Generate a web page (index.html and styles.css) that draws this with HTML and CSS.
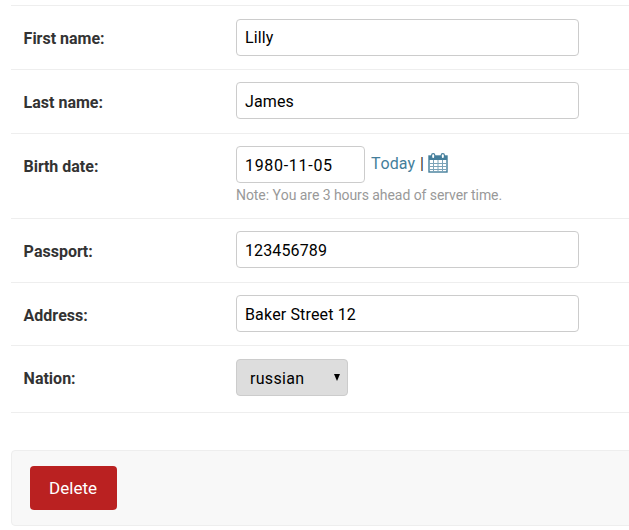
FILE: index.html
```html
<!DOCTYPE html>
<html lang="en">
<head>
  <meta charset="UTF-8" />
  <meta name="viewport" content="width=device-width, initial-scale=1.0"/>
  <title>Change person</title>
  <link rel="stylesheet" href="styles.css">
</head>
<body>
  <form class="change-form">
    <div class="form-row form-row-first">
      <label class="row-label" for="id_first_name">First name:</label>
      <input class="text-field field-first" id="id_first_name" type="text" value="Lilly">
    </div>
    <div class="form-row">
      <label class="row-label" for="id_last_name">Last name:</label>
      <input class="text-field" id="id_last_name" type="text" value="James">
    </div>
    <div class="form-row form-row-date">
      <label class="row-label" for="id_birth_date">Birth date:</label>
      <div class="date-field">
        <div class="date-line">
          <input class="text-field date-input" id="id_birth_date" type="text" value="1980-11-05">
          <a class="date-link" href="#">Today</a>
          <span class="date-sep">|</span>
          <a class="date-icon" href="#" aria-label="Choose a date">
            <svg width="20" height="20" viewBox="0 0 20 20">
              <rect x="1" y="3" width="18" height="16" fill="#fff" stroke="#447e9b" stroke-width="1.4"/>
              <rect x="1" y="3" width="18" height="4" fill="#447e9b"/>
              <path d="M1 10.5H19M1 13.5H19M1 16.5H19M5.5 7V19M10 7V19M14.5 7V19" fill="none" stroke="#7ba3b8" stroke-width="1"/>
              <rect x="3.6" y="0.6" width="3.2" height="5" rx="1.6" fill="#fff" stroke="#447e9b" stroke-width="1.2"/>
              <rect x="13.2" y="0.6" width="3.2" height="5" rx="1.6" fill="#fff" stroke="#447e9b" stroke-width="1.2"/>
            </svg>
          </a>
        </div>
        <p class="help-note">Note: You are 3 hours ahead of server time.</p>
      </div>
    </div>
    <div class="form-row">
      <label class="row-label" for="id_passport">Passport:</label>
      <input class="text-field" id="id_passport" type="text" value="123456789">
    </div>
    <div class="form-row">
      <label class="row-label" for="id_address">Address:</label>
      <input class="text-field field-address" id="id_address" type="text" value="Baker Street 12">
    </div>
    <div class="form-row form-row-last">
      <label class="row-label" for="id_nation">Nation:</label>
      <span class="select-wrap">
        <select class="select-field" id="id_nation">
          <option>russian</option>
        </select>
      </span>
    </div>
    <div class="submit-row">
      <a class="delete-link" href="#">Delete</a>
    </div>
  </form>
</body>
</html>
```

FILE: styles.css
```css
html, body {
  overflow: hidden;
}
body {
  font-family: Roboto, sans-serif;
  font-kerning: none;
  background: #fff;
  margin: 0;
  padding: 5.25px 0 0 11px;
  color: #333;
}
.form-row {
  display: flex;
  align-items: flex-start;
  box-sizing: border-box;
  height: 63.75px;
  border-top: 1px solid #eee;
  padding: 12.25px 0 0 12.6px;
}
.form-row-date {
  height: 85px;
}
.form-row-last {
  height: 68px;
  padding-top: 12.75px;
  border-bottom: 1px solid #eee;
}
.row-label {
  width: 212.4px;
  padding-top: 2px;
  font-size: 16px;
  font-weight: 700;
  line-height: 37px;
  color: #333;
}
.form-row-first .row-label,
.form-row-last .row-label {
  padding-top: 1px;
}
.text-field {
  box-sizing: border-box;
  width: 343px;
  height: 37px;
  padding: 1px 8px 0;
  border: 1px solid #ccc;
  border-radius: 4px;
  font-family: inherit;
  font-kerning: none;
  font-size: 16px;
  letter-spacing: 0.13px;
  color: #000;
  background: #fff;
}
.field-first {
  padding-top: 0;
}
.field-address {
  padding-top: 2px;
}
.date-line {
  display: flex;
  align-items: center;
  height: 37px;
}
.date-input {
  width: 129px;
  padding-top: 2px;
  letter-spacing: 0.7px;
}
.date-link {
  margin: 0 0 2px 6px;
  font-size: 16px;
  color: #447e9b;
  text-decoration: none;
}
.date-sep {
  margin: 0 0 2px 5px;
  font-size: 16px;
  color: #333;
}
.date-icon {
  display: flex;
  margin: 0 0 4px 4px;
}
.help-note {
  margin: 4px 0 0;
  font-size: 14px;
  letter-spacing: -0.07px;
  color: #999;
}
.select-wrap {
  position: relative;
  display: block;
  width: 112px;
  height: 37px;
}
.select-wrap::after {
  content: "";
  position: absolute;
  top: 15px;
  right: 8px;
  border-top: 7px solid #000;
  border-left: 3.5px solid transparent;
  border-right: 3.5px solid transparent;
}
.select-field {
  appearance: none;
  box-sizing: border-box;
  width: 112px;
  height: 37px;
  padding: 1px 13px 0;
  border: 1px solid #ccc;
  border-radius: 4px;
  font-family: inherit;
  font-kerning: none;
  font-size: 16px;
  letter-spacing: 0.3px;
  color: #000;
  background: #ddd;
}
.submit-row {
  display: flex;
  margin: 37px -6px 0 0;
  padding: 15px 18px;
  height: 44px;
  border: 1px solid #eee;
  border-radius: 4px;
  background: #f8f8f8;
}
.delete-link {
  padding: 0 19.5px 0 19px;
  line-height: 44px;
  border-radius: 4px;
  font-size: 17px;
  letter-spacing: 0.03px;
  color: #fff;
  text-decoration: none;
  background: #ba2121;
}
```
